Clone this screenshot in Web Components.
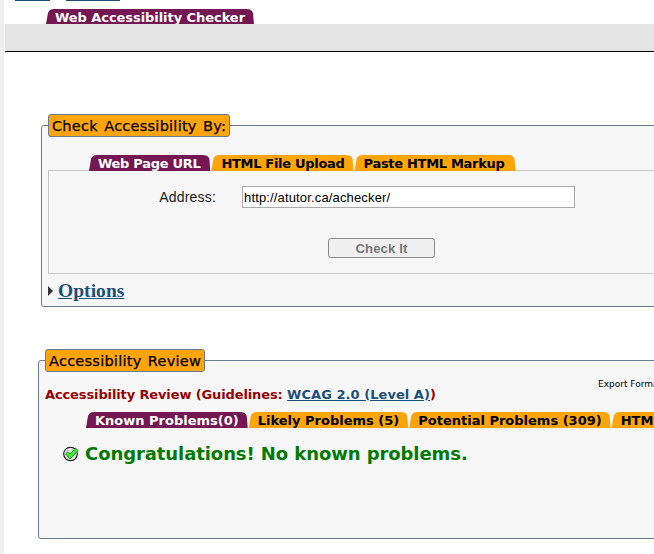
<!DOCTYPE html>
<html>
<head>
<meta charset="utf-8">
<title>Web Accessibility Checker</title>
<style>
    html, body { margin: 0; padding: 0; background: #fff; overflow: hidden; height: 554px; }
    body { font-family: "DejaVu Sans", Verdana, sans-serif; font-size: 13px; color: #000; }
</style>
</head>
<body>
<checker-page></checker-page>

<script>
class TabBar extends HTMLElement {
    constructor() {
        super();
        this.attachShadow({ mode: 'open' });
        this.shadowRoot.innerHTML = `
            <style>
                :host { display: flex; gap: 1px; white-space: nowrap; }
            </style>
            <slot></slot>
        `;
    }
}

class TabItem extends HTMLElement {
    constructor() {
        super();
        this.attachShadow({ mode: 'open' });
        this.shadowRoot.innerHTML = `
            <style>
                :host {
                    display: block;
                    flex: none;
                    height: 16px;
                    line-height: 18px;
                    padding: 0 9px;
                    font-size: 13px;
                    font-weight: bold;
                    color: #000;
                    background: #ffa509;
                    clip-path: polygon(0 100%, 2px 4px, 3px 2px, 5px 0.5px, 8px 0, calc(100% - 8px) 0, calc(100% - 4px) 0.5px, calc(100% - 2px) 2px, calc(100% - 1px) 4px, 100% 100%);
                }
                :host([active]) { background: #741652; color: #fff; }
            </style>
            <slot></slot>
        `;
    }
}

class PageHeader extends HTMLElement {
    constructor() {
        super();
        this.attachShadow({ mode: 'open' });
        this.shadowRoot.innerHTML = `
            <style>
                :host { display: block; padding-left: 1px; }
                .links { display: flex; height: 9px; padding-left: 10px; gap: 16px; }
                .links span { display: block; height: 1px; background: #1b4f7c; }
                .links span:nth-child(1) { width: 35px; }
                .links span:nth-child(2) { width: 54px; }
                tab-bar { padding-left: 41px; letter-spacing: -0.06px; }
                tab-item { height: 15px; line-height: 17px; }
                .band { height: 27px; background: #e4e4e4; border-bottom: 1px solid #000; }
            </style>
            <div class="links"><span></span><span></span></div>
            <tab-bar><tab-item active>Web Accessibility Checker</tab-item></tab-bar>
            <div class="band"></div>
        `;
    }
}

class PanelBox extends HTMLElement {
    constructor() {
        super();
        this.attachShadow({ mode: 'open' });
        this.shadowRoot.innerHTML = `
            <style>
                :host { display: block; width: 760px; }
                fieldset {
                    margin: 0;
                    padding: 0;
                    min-width: 0;
                    box-sizing: border-box;
                    height: var(--box-height);
                    background: #f7f7f7;
                    border: 1px solid #6b7b8f;
                    border-radius: 3px;
                }
                legend {
                    margin-left: 6px;
                    padding: 0 3px;
                    height: 21px;
                    line-height: 22px;
                    font-size: 14.5px;
                    letter-spacing: 0.25px;
                    word-spacing: 1.5px;
                    -webkit-text-stroke: 0.25px #000;
                    background: #ffa509;
                    border: 1px solid #6b7b8f;
                    border-radius: 3px;
                }
            </style>
            <fieldset>
                <legend><slot name="legend"></slot></legend>
                <slot></slot>
            </fieldset>
        `;
    }
}

class AddressForm extends HTMLElement {
    constructor() {
        super();
        this.attachShadow({ mode: 'open' });
        this.shadowRoot.innerHTML = `
            <style>
                :host {
                    display: block;
                    box-sizing: border-box;
                    height: 104px;
                    margin-left: 6px;
                    background: #f7f7f7;
                    border: 1px solid #c8c8c8;
                    font-family: "Liberation Sans", Arial, sans-serif;
                }
                .row { display: flex; align-items: center; padding-top: 15px; }
                label { width: 167px; text-align: right; font-size: 14px; color: #222; letter-spacing: 0.2px; }
                input {
                    box-sizing: border-box;
                    width: 333px;
                    height: 22px;
                    margin: 0 0 0 26px;
                    padding: 0 1px;
                    font: 13px "Liberation Sans", Arial, sans-serif;
                    letter-spacing: 0.15px;
                    color: #000;
                    background: #fff;
                    border: 1px solid #aaa;
                    outline: none;
                }
                .actions { padding: 30px 0 0 279px; }
                button {
                    display: block;
                    width: 107px;
                    height: 20px;
                    padding: 0;
                    font: bold 13px "Liberation Sans", Arial, sans-serif;
                    letter-spacing: 0.2px;
                    color: #777;
                    background: #efefef;
                    border: 1px solid #8a8a8a;
                    border-radius: 3px;
                }
            </style>
            <div class="row">
                <label for="uri">Address:</label>
                <input id="uri" type="text" value="http://atutor.ca/achecker/">
            </div>
            <div class="actions"><button type="button">Check It</button></div>
        `;
    }
}

class OptionsToggle extends HTMLElement {
    constructor() {
        super();
        this.attachShadow({ mode: 'open' });
        this.shadowRoot.innerHTML = `
            <style>
                :host {
                    display: flex;
                    align-items: center;
                    gap: 5px;
                    padding: 7px 0 0 6px;
                }
                i { width: 0; height: 0; border-left: 5px solid #333; border-top: 5px solid transparent; border-bottom: 5px solid transparent; }
                a {
                    font: bold 19.5px/20px "Liberation Serif", "Times New Roman", serif;
                    letter-spacing: 0.05px;
                    color: #1b4f7c;
                    text-decoration: underline;
                }
            </style>
            <i></i><a href="#">Options</a>
        `;
    }
}

class ReviewResult extends HTMLElement {
    constructor() {
        super();
        this.attachShadow({ mode: 'open' });
        this.shadowRoot.innerHTML = `
            <style>
                :host { display: block; position: relative; }
                .export {
                    position: absolute;
                    top: 7px;
                    left: 559px;
                    font-size: 9px;
                    white-space: nowrap;
                    color: #000;
                }
                h3 {
                    margin: 0;
                    padding: 15px 0 0 6px;
                    font-size: 13px;
                    line-height: 16px;
                    letter-spacing: -0.12px;
                    font-weight: bold;
                    color: #990000;
                    white-space: nowrap;
                }
                h3 a { color: #1b4f7c; letter-spacing: 0.05px; }
                tab-bar { padding: 9px 0 0 47px; }
                .ok {
                    display: flex;
                    align-items: center;
                    gap: 6px;
                    padding: 14px 0 0 24px;
                    font-size: 18px;
                    line-height: 24px;
                    letter-spacing: -0.08px;
                    font-weight: bold;
                    color: #007a00;
                    white-space: nowrap;
                }
                svg { display: block; flex: none; }
            </style>
            <div class="export">Export Format</div>
            <h3>Accessibility Review (Guidelines: <a href="#">WCAG 2.0 (Level A)</a>)</h3>
            <tab-bar>
                <tab-item active>Known Problems(0)</tab-item>
                <tab-item>Likely Problems (5)</tab-item>
                <tab-item>Potential Problems (309)</tab-item>
                <tab-item>HTML Validation</tab-item>
            </tab-bar>
            <div class="ok">
                <svg width="16" height="16" viewBox="0 0 16 16">
                    <circle cx="7.5" cy="8" r="6.8" fill="#e2e2e2" stroke="#111" stroke-width="1.1"/>
                    <path d="M2.6 8 L5 5.8 L7 8 L12.6 2 L15 4.4 L7 13.2 Z" fill="#35f02a" stroke="#0b5d0b" stroke-width="0.7" stroke-linejoin="round"/>
                </svg>
                <span>Congratulations! No known problems.</span>
            </div>
        `;
    }
}

class CheckerPage extends HTMLElement {
    constructor() {
        super();
        this.attachShadow({ mode: 'open' });
        this.shadowRoot.innerHTML = `
            <style>
                :host {
                    display: block;
                    height: 554px;
                    overflow: hidden;
                    border-left: 4px solid #eeeeee;
                }
                .first { margin: 62px 0 0 37px; --box-height: 193px; }
                .second { margin: 42px 0 0 34px; --box-height: 190px; }
                .upload { padding: 18px 0 0 47px; margin-bottom: -1px; position: relative; letter-spacing: -0.3px; }
                .upload tab-item { padding: 0 9px 0 10px; }
                .upload tab-item:first-child { padding: 0 10px 0 9px; }
                .upload tab-item:last-child { padding: 0 11px 0 9px; }
            </style>
            <page-header></page-header>
            <panel-box class="first">
                <span slot="legend">Check Accessibility By:</span>
                <tab-bar class="upload">
                    <tab-item active>Web Page URL</tab-item>
                    <tab-item>HTML File Upload</tab-item>
                    <tab-item>Paste HTML Markup</tab-item>
                </tab-bar>
                <address-form></address-form>
                <options-toggle></options-toggle>
            </panel-box>
            <panel-box class="second">
                <span slot="legend">Accessibility Review</span>
                <review-result></review-result>
            </panel-box>
        `;
    }
}

customElements.define('tab-bar', TabBar);
customElements.define('tab-item', TabItem);
customElements.define('page-header', PageHeader);
customElements.define('panel-box', PanelBox);
customElements.define('address-form', AddressForm);
customElements.define('options-toggle', OptionsToggle);
customElements.define('review-result', ReviewResult);
customElements.define('checker-page', CheckerPage);
</script>
</body>
</html>
